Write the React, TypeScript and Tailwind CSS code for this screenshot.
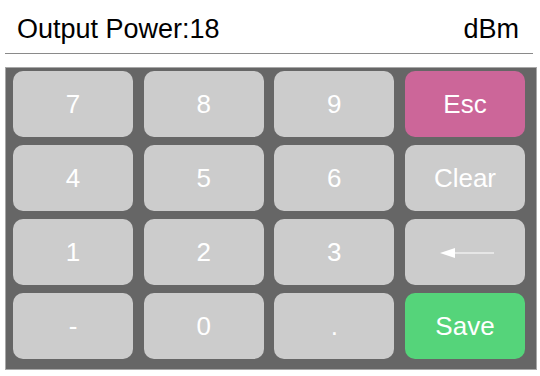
import React from 'react';

const keys = ['7', '8', '9', 'Esc', '4', '5', '6', 'Clear', '1', '2', '3', 'back', '-', '0', '.', 'Save'];

const BackArrow = () => (
  <svg width="54" height="12" viewBox="0 0 54 12" className="translate-x-[2px] translate-y-[1px]">
    <polygon points="0,6 15,1 15,11" fill="#ffffff" />
    <line x1="14" y1="6" x2="54" y2="6" stroke="#ffffff" strokeWidth="1.2" />
  </svg>
);

export default function App() {
  return (
    <div className="w-[540px] h-[376px] bg-white overflow-hidden" style={{ fontFamily: '"Liberation Sans", Arial, sans-serif' }}>
      {/* header */}
      <div className="flex justify-between items-center pt-[14px] pl-[17px] pr-[21px] text-[27px] leading-[31px] text-black">
        <span>Output Power:18</span>
        <span>dBm</span>
      </div>
      <div className="ml-[5px] mt-[8px] w-[528px] h-px bg-[#8a8a8a]" />

      {/* keypad */}
      <div className="ml-[5px] mt-[13px] w-[532px] h-[303px] bg-[#666666] border border-[#a8a8a8] pl-[7px] pt-[3px]">
        <div className="grid grid-cols-[120px_120px_120px_120px] auto-rows-[66px] gap-x-[10.67px] gap-y-[8px]">
          {keys.map((k) => {
            const bg = k === 'Esc' ? 'bg-[#cc6699]' : k === 'Save' ? 'bg-[#55d47a]' : 'bg-[#cccccc]';
            return (
              <div key={k} className={`${bg} rounded-[10px] flex items-center justify-center text-white text-[26px] leading-none`}>
                {k === 'back' ? <BackArrow /> : k}
              </div>
            );
          })}
        </div>
      </div>
    </div>
  );
}
